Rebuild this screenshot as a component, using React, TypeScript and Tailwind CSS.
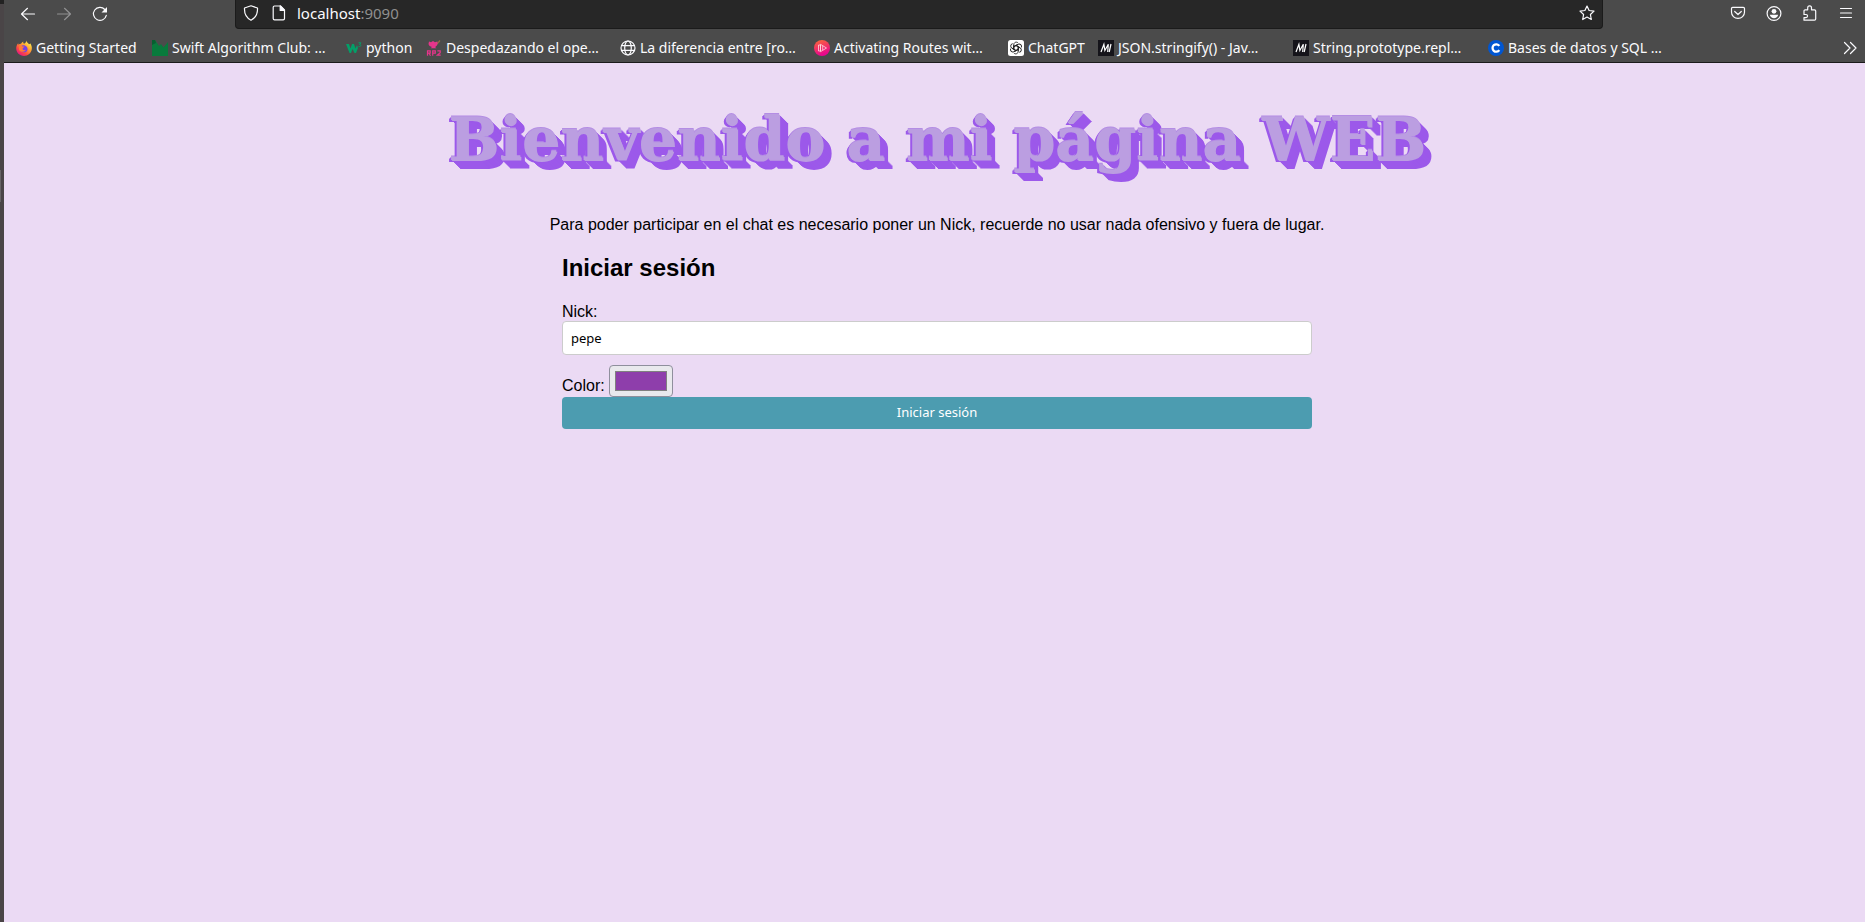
import type { ReactNode } from "react";

function Glyph({ children, dim = false }: { children: ReactNode; dim?: boolean }) {
  return (
    <svg
      viewBox="0 0 16 16"
      aria-hidden="true"
      className={dim ? "size-4 shrink-0 opacity-40" : "size-4 shrink-0"}
      fill="none"
      stroke="currentColor"
      strokeWidth="1.2"
      strokeLinecap="round"
      strokeLinejoin="round"
    >
      {children}
    </svg>
  );
}

function Favicon({ children }: { children: ReactNode }) {
  return (
    <svg viewBox="0 0 16 16" aria-hidden="true" className="size-4 shrink-0">
      {children}
    </svg>
  );
}

const firefox = (
  <Favicon>
    <defs>
      <linearGradient id="fx" x1="0.85" y1="0.1" x2="0.2" y2="0.95">
        <stop offset="0" stopColor="#fff04f" />
        <stop offset="0.35" stopColor="#ffa531" />
        <stop offset="0.7" stopColor="#ff4a42" />
        <stop offset="1" stopColor="#e31587" />
      </linearGradient>
    </defs>
    <path
      d="M10.2 0.4C10.4 2 12 2.7 13 4.2c1.2-.3 1.2-1 1.2-1C15.6 5.2 16 7 15.8 9 15.3 13 12 15.9 8 15.9 3.5 15.9.2 12.5.2 8.300.2 6.400 1 4.500 2.200 3.200l.3 1.500C3.200 4 4.200 3.700 5 3.800 5.500 2.700 6.300 1.900 7.300 1.500c-.3 1 0 1.700.7 2.200 1.500-.8 2.300-1.700 2.200-3.300z"
      fill="url(#fx)"
    />
    <path d="M5 6.200c1.200-1.100 3.100-1.100 4.300-.4 1.700.8 2.500 2.300 2.200 3.900-.4 1.900-1.900 2.700-3.500 2.600-2.200 0-3.500-1.500-3.500-3.300z" fill="#7542e5" />
    <path d="M3 6.300c1-.9 3-.7 3.600.2l2 .1c-.4 1-1.700 1.200-2 2.200-.1 1 1.500 2 3.300 1-1 2.700-5.900 2.600-6.900-.4z" fill="#ff7a35" />
  </Favicon>
);

const swift = (
  <Favicon>
    <path d="M0 0h3l4 6 2-2 2.500 3.500L16 2v14H0z" fill="#087a3c" />
    <path d="M0 0h3l1 3-4 2z" fill="#065f30" />
  </Favicon>
);

const w3 = (
  <Favicon>
    <path d="M0 4h3l1.500 4.500L6 4h2l1.500 4.500L11 5l1 3-2 5H8.500L6.500 9l-1.500 4H3.500z" fill="#049e68" />
    <path d="M12.500 2.800h2.400l-1.300 1.700c2 .1 1.500 2.500-1.100 1.900" fill="none" stroke="#049e68" strokeWidth="1" />
  </Favicon>
);

const rp2 = (
  <Favicon>
    <path d="M11 4l3-3.500" stroke="#94703e" strokeWidth="1.2" />
    <path d="M3 1.500l2 .7L7 1l2 1.200 2.500-.7v2.500c-.5 2-1.700 2.600-2.500 3l1.500 1.200h-6l1.500-1.200C4 6.500 3 6 2.500 4z" fill="#e6358b" />
    <path
      d="M1.500 15.700V10.800h2.700v2.400H1.500M3 13.200l1.500 2.500M6.700 15.700V10.800h2.600v2.400H6.700M11.400 10.800h2.800v2l-2.800 2.300h3.300"
      fill="none"
      stroke="#e6358b"
      strokeWidth="1.200"
    />
  </Favicon>
);

const globe = (
  <Glyph>
    <circle cx="8" cy="8" r="7" />
    <ellipse cx="8" cy="8" rx="3.3" ry="7" />
    <path d="M1.5 5.700h13M1.5 10.300h13" />
  </Glyph>
);

const ultimate = (
  <Favicon>
    <defs>
      <linearGradient id="uc" x1="0" y1="0" x2="0.3" y2="1">
        <stop offset="0" stopColor="#fb6b35" />
        <stop offset="1" stopColor="#e9058f" />
      </linearGradient>
    </defs>
    <circle cx="8" cy="8" r="8" fill="url(#uc)" />
    <path d="M4.500 5v6h2V5zM6.500 4.300l6 3.700-6 3.700zM8.700 6v4" fill="none" stroke="#ffd9e0" strokeWidth="0.8" strokeLinejoin="round" />
  </Favicon>
);

const chatgpt = (
  <Favicon>
    <rect width="16" height="16" rx="2.5" fill="#fff" />
    <g fill="none" stroke="#222" strokeWidth="0.9">
      {[0, 60, 120, 180, 240, 300].map((angle) => (
        <path
          key={angle}
          transform={`rotate(${angle} 8 8)`}
          d="M5.800 9.300V4.600C5.800 2.300 8.600 1.300 10.200 3M5.800 6.700L8 5.400l4 2.300"
        />
      ))}
    </g>
  </Favicon>
);

const mdn = (
  <Favicon>
    <rect width="16" height="16" fill="#15141a" />
    <path d="M3 12L5.900 4.300 6.900 10.500 10.300 4.300 9.700 12M13 4l-1.800 8" fill="none" stroke="#fff" strokeWidth="1.2" />
  </Favicon>
);

const coursera = (
  <Favicon>
    <circle cx="8" cy="8" r="8" fill="#0056d2" />
    <path d="M11.300 5.900a3.700 3.700 0 1 0 0 4.200" fill="none" stroke="#fff" strokeWidth="2.300" />
  </Favicon>
);

const bookmarks: { label: string; icon: ReactNode; width: string }[] = [
  { label: "Getting Started", icon: firefox, width: "w-32" },
  { label: "Swift Algorithm Club: …", icon: swift, width: "w-[186px]" },
  { label: "python", icon: w3, width: "w-18" },
  { label: "Despedazando el ope…", icon: rp2, width: "w-[186px]" },
  { label: "La diferencia entre [ro…", icon: globe, width: "w-[186px]" },
  { label: "Activating Routes wit…", icon: ultimate, width: "w-[186px]" },
  { label: "ChatGPT", icon: chatgpt, width: "w-[82px]" },
  { label: "JSON.stringify() - Jav…", icon: mdn, width: "w-[187px]" },
  { label: "String.prototype.repl…", icon: mdn, width: "w-[187px]" },
  { label: "Bases de datos y SQL …", icon: coursera, width: "w-[186px]" },
];

const iconButton = "flex size-4 shrink-0 items-center justify-center";

function BrowserChrome() {
  return (
    <header className="flex h-[63px] flex-col border-b border-[#1b1b1b] bg-[#4b4b4b] font-['Noto_Sans',sans-serif] text-[#fbfbfe]">
      <div className="flex items-start">
        <nav aria-label="Navegación" className="flex w-[231px] shrink-0 gap-5 pt-1.5 pl-4">
          <button type="button" aria-label="Atrás" className={iconButton}>
            <Glyph>
              <path d="M14.500 8H1.500M7.500 2.300L1.500 8l6 5.700" />
            </Glyph>
          </button>
          <button type="button" aria-label="Adelante" disabled className={iconButton}>
            <Glyph dim>
              <path d="M1.500 8h13M8.500 2.300l6 5.700-6 5.700" />
            </Glyph>
          </button>
          <button type="button" aria-label="Recargar" className={iconButton}>
            <Glyph>
              <path d="M14.300 9.300A6.500 6.500 0 1 1 12.800 3.500" />
              <path d="M15 1v5.500H9.500z" fill="currentColor" stroke="none" />
            </Glyph>
          </button>
        </nav>
        <div className="mr-[127px] flex h-[29px] grow items-start rounded-b border border-t-0 border-[#1b1b1b] bg-[#272727] px-[7px] pt-[5px]">
          <Glyph>
            <path d="M8 .8L14.500 3c.3 5.500-1.500 9.800-6.500 12.300C3 12.800 1.200 8.500 1.500 3z" />
          </Glyph>
          <div className="ml-3 flex grow gap-2.5">
            <Glyph>
              <path d="M3.500 1h6l4 4v8.500a1.300 1.300 0 0 1-1.300 1.300H3.500a1.300 1.300 0 0 1-1.300-1.300V2.300A1.300 1.300 0 0 1 3.500 1z" />
              <path d="M9.200 1v4.500h4.300z" fill="currentColor" />
            </Glyph>
            <p className="text-[15px] leading-4">
              localhost<span className="text-[#8f8f8f]">:9090</span>
            </p>
          </div>
          <button type="button" aria-label="Añadir a marcadores" className={iconButton}>
            <Glyph>
              <path d="M8 1l2.100 4.500 4.900.6-3.600 3.400.9 5L8 12.100l-4.300 2.400.9-5L1 6.100l4.900-.6z" />
            </Glyph>
          </button>
        </div>
        <nav aria-label="Herramientas" className="flex shrink-0 gap-5 pt-[5px] pr-[11px]">
          <button type="button" aria-label="Pocket" className={iconButton}>
            <Glyph>
              <path d="M2.700 2.300h10.600a1.200 1.200 0 0 1 1.200 1.200v3.700a6.500 6.200 0 0 1-13 0V3.500a1.200 1.200 0 0 1 1.200-1.200z" />
              <path d="M4.700 6.500L8 9.500l3.300-3" />
            </Glyph>
          </button>
          <button type="button" aria-label="Cuenta" className={iconButton}>
            <Glyph>
              <circle cx="8" cy="8.500" r="6.900" />
              <circle cx="8" cy="6.300" r="2.400" fill="currentColor" stroke="none" />
              <path d="M3.800 9.800h8.400C11.700 12 10 13.200 8 13.200S4.300 12 3.800 9.800z" fill="currentColor" stroke="none" />
            </Glyph>
          </button>
          <button type="button" aria-label="Extensiones" className={iconButton}>
            <Glyph>
              <path d="M2 9.500V6a1.200 1.200 0 0 1 1.200-1.200h2.500V2.700a1.900 1.900 0 0 1 3.800 0v2.100h3A1.200 1.200 0 0 1 13.700 6v8a1.200 1.200 0 0 1-1.200 1.200H2v-2.600h2a1.500 1.500 0 0 0 0-3.100z" />
            </Glyph>
          </button>
          <button type="button" aria-label="Menú" className={iconButton}>
            <Glyph>
              <path d="M2.500 3.500h11M2.500 8h11M2.500 12.500h11" />
            </Glyph>
          </button>
        </nav>
      </div>
      <nav aria-label="Marcadores" className="flex grow items-center gap-2 pt-1 pr-[7px] pl-3">
        {bookmarks.map(({ label, icon, width }) => (
          <a key={label} href="#" className={`flex shrink-0 items-center gap-1 text-sm whitespace-nowrap ${width}`}>
            {icon}
            {label}
          </a>
        ))}
        <button type="button" aria-label="Más marcadores" className="ml-auto flex size-4 shrink-0">
          <Glyph>
            <path d="M2.500 2.500L8 8l-5.500 5.500M8.500 2.500L14 8l-5.500 5.500" />
          </Glyph>
        </button>
      </nav>
    </header>
  );
}

function LoginForm() {
  return (
    <form className="mt-5 flex w-full max-w-[750px] flex-col" onSubmit={(event) => event.preventDefault()}>
      <h2 className="text-2xl leading-7 font-bold">Iniciar sesión</h2>
      <label htmlFor="nick" className="mt-[21px] leading-[18px]">
        Nick:
      </label>
      <input
        id="nick"
        type="text"
        defaultValue="pepe"
        className="h-[34px] rounded border border-[#cccccc] bg-white px-2 font-['Noto_Sans',sans-serif] text-[13px]"
      />
      <div className="mt-2.5 flex items-end gap-1">
        <label htmlFor="color" className="pb-0.5 leading-[18px]">
          Color:
        </label>
        <input
          id="color"
          type="color"
          defaultValue="#8e3eab"
          className="h-8 w-16 rounded border border-[#8f8f9d] bg-[#e9e9ed] p-[5px] [&::-webkit-color-swatch]:rounded-none [&::-webkit-color-swatch]:border [&::-webkit-color-swatch]:border-[#808080] [&::-webkit-color-swatch-wrapper]:p-0"
        />
      </div>
      <button type="submit" className="h-8 rounded bg-[#4c9cb0] font-['Noto_Sans',sans-serif] text-[13px] text-white">
        Iniciar sesión
      </button>
    </form>
  );
}

export default function App() {
  return (
    <div className="flex min-h-screen bg-[#4a4547]">
      <div className="flex w-1 shrink-0 flex-col">
        <div className="h-1 bg-[#222222]" />
        <div className="mt-[166px] h-8 w-px bg-[#686466]" />
      </div>
      <div className="flex min-w-0 grow flex-col bg-[#ebdaf4]">
        <BrowserChrome />
        <main className="flex flex-col items-center pt-[41px] pl-[5px] font-['Liberation_Sans',Arial,sans-serif] text-base text-black">
          <h1 className="text-center font-['DejaVu_Serif',serif] text-[60px] leading-[70px] font-bold text-[#bb9ee1] [text-shadow:1px_1px_0_#bb9ee1,-1px_1px_0_#9c59ea,-2px_2px_0_#9c59ea,0_-1px_0_#b48de4,2px_2px_0_#9c59ea,3px_3px_0_#9c59ea,4px_4px_0_#9c59ea,5px_5px_0_#9c59ea,6px_6px_0_#9c59ea,7px_7px_0_#9c59ea,8px_8px_0_#9c59ea,9px_9px_0_#9c59ea]">
            Bienvenido a mi página WEB
          </h1>
          <p className="mt-[42px] leading-[18px]">
            Para poder participar en el chat es necesario poner un Nick, recuerde no usar nada ofensivo y fuera de lugar.
          </p>
          <LoginForm />
        </main>
      </div>
    </div>
  );
}
